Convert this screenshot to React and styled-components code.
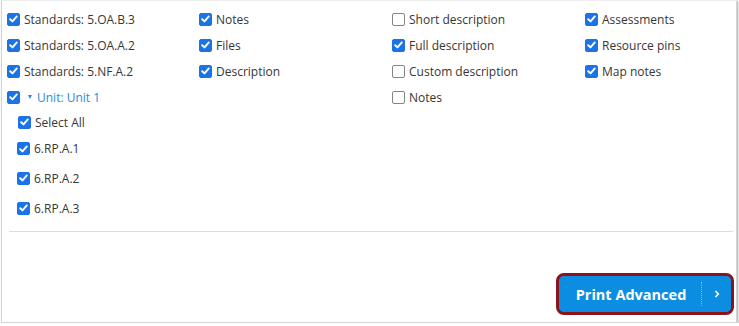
import React from "react";
import styled, { createGlobalStyle } from "styled-components";

const GlobalStyle = createGlobalStyle`
  html, body {
    margin: 0;
    padding: 0;
    background: #ffffff;
  }
  body {
    font-family: "Open Sans", "Noto Sans", Arial, sans-serif;
  }
`;

const Panel = styled.div`
  box-sizing: border-box;
  width: 736px;
  height: 323px;
  margin-left: 1px;
  border: 1px solid #d4d4d4;
  border-top-color: #ececec;
  box-shadow: 1px 1px 2px rgba(0, 0, 0, 0.35);
  background: #fff;
  display: flex;
  flex-direction: column;
  padding: 5px 2px 7px 5px;
`;

const Columns = styled.div`
  display: grid;
  grid-template-columns: 192px 193px 193px 1fr;
`;

const Column = styled.div`
  display: flex;
  flex-direction: column;
`;

const Row = styled.label`
  display: flex;
  align-items: center;
  gap: 4px;
  height: ${(p) => p.$h || 26}px;
  padding-left: ${(p) => p.$indent || 0}px;
  font-size: 12px;
  color: #363636;
  white-space: nowrap;
`;

const Box = styled.span`
  box-sizing: border-box;
  width: 13px;
  height: 13px;
  border-radius: 2px;
  flex: none;
  display: inline-flex;
  align-items: center;
  justify-content: center;
  background: ${(p) => (p.$on ? "#1a74e8" : "#fff")};
  border: 1px solid ${(p) => (p.$on ? "#1a74e8" : "#858585")};
`;

const UnitLink = styled.span`
  color: #2b8ad8;
  display: inline-flex;
  align-items: center;
  gap: 5px;
  margin-left: 4px;
`;

const Caret = styled.span`
  width: 0;
  height: 0;
  border-left: 2.5px solid transparent;
  border-right: 2.5px solid transparent;
  border-top: 4px solid #2b8ad8;
`;

const SubList = styled.div`
  display: flex;
  flex-direction: column;
`;

const Divider = styled.hr`
  border: none;
  border-top: 1px solid #dcdcdc;
  margin: 8px 1px 0 2px;
`;

const Footer = styled.div`
  margin-top: auto;
  display: flex;
  justify-content: flex-end;
`;

const Highlight = styled.div`
  border: 3px solid #8d1219;
  border-radius: 8px;
  background: #0b8de2;
`;

const PrintButton = styled.button`
  display: flex;
  align-items: center;
  height: 36px;
  width: 172px;
  padding: 0;
  border: none;
  border-radius: 5px;
  background: #0b8de2;
  color: #fff;
  font-family: "Open Sans", Arial, sans-serif;
  font-weight: 700;
  font-size: 14.5px;
  cursor: pointer;
`;

const ButtonLabel = styled.span`
  flex: 1;
  text-align: center;
  padding-left: 2px;
`;

const Split = styled.span`
  width: 29px;
  height: 24px;
  border-left: 1px dotted rgba(255, 255, 255, 0.45);
  display: flex;
  align-items: center;
  justify-content: center;
`;

const Check = () => (
  <svg width="9" height="8" viewBox="0 0 9 8">
    <path
      d="M1.2 4.2 L3.5 6.4 L7.8 1.4"
      fill="none"
      stroke="#fff"
      strokeWidth="1.9"
      strokeLinecap="round"
      strokeLinejoin="round"
    />
  </svg>
);

const Item = ({ on = true, children, h, indent }) => (
  <Row $h={h} $indent={indent}>
    <Box $on={on}>{on && <Check />}</Box>
    {children}
  </Row>
);

const col2 = ["Notes", "Files", "Description"];
const col3 = [
  ["Short description", false],
  ["Full description", true],
  ["Custom description", false],
  ["Notes", false],
];
const col4 = ["Assessments", "Resource pins", "Map notes"];

const App = () => {
  return (
    <>
      <GlobalStyle />
      <Panel>
        <Columns>
          <Column>
            <Item>Standards: 5.OA.B.3</Item>
            <Item>Standards: 5.OA.A.2</Item>
            <Item>Standards: 5.NF.A.2</Item>
            <Row>
              <Box $on>
                <Check />
              </Box>
              <UnitLink>
                <Caret />
                Unit: Unit 1
              </UnitLink>
            </Row>
            <SubList>
              <Item indent={11} h={24}>
                Select All
              </Item>
              <Item indent={10} h={29}>
                6.RP.A.1
              </Item>
              <Item indent={10} h={30}>
                6.RP.A.2
              </Item>
              <Item indent={10} h={30}>
                6.RP.A.3
              </Item>
            </SubList>
          </Column>
          <Column>
            {col2.map((t) => (
              <Item key={t}>{t}</Item>
            ))}
          </Column>
          <Column>
            {col3.map(([t, on]) => (
              <Item key={t} on={on}>
                {t}
              </Item>
            ))}
          </Column>
          <Column>
            {col4.map((t) => (
              <Item key={t}>{t}</Item>
            ))}
          </Column>
        </Columns>
        <Divider />
        <Footer>
          <Highlight>
            <PrintButton>
              <ButtonLabel>Print Advanced</ButtonLabel>
              <Split>
                <svg width="6" height="8" viewBox="0 0 6 8">
                  <path
                    d="M1.5 1 L4.3 4 L1.5 7"
                    fill="none"
                    stroke="#fff"
                    strokeWidth="1.6"
                  />
                </svg>
              </Split>
            </PrintButton>
          </Highlight>
        </Footer>
      </Panel>
    </>
  );
};

export default App;
